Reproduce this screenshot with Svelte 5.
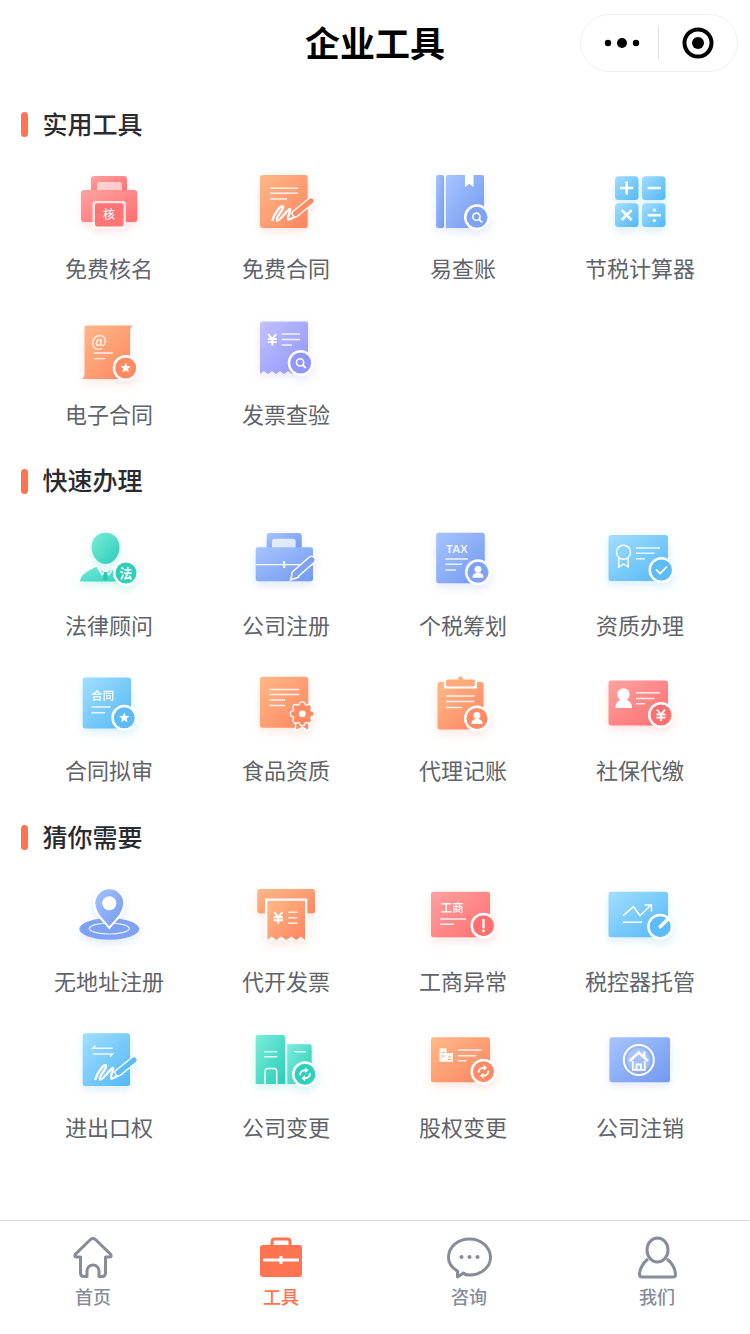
<script>
  const sections = [
    { title: '实用工具', items: [
      ['免费核名', 'printer', 'red'], ['免费合同', 'contract', 'orange'], ['易查账', 'book', 'blue'], ['节税计算器', 'calc', 'sky'],
      ['电子合同', 'econtract', 'orange'], ['发票查验', 'invoice', 'violet']
    ] },
    { title: '快速办理', items: [
      ['法律顾问', 'lawyer', 'teal'], ['公司注册', 'case', 'blue'], ['个税筹划', 'tax', 'blue'], ['资质办理', 'cert', 'sky'],
      ['合同拟审', 'review', 'sky'], ['食品资质', 'food', 'orange'], ['代理记账', 'clip', 'orange'], ['社保代缴', 'idcard', 'red']
    ] },
    { title: '猜你需要', items: [
      ['无地址注册', 'pin', 'blue'], ['代开发票', 'receipt', 'orange'], ['工商异常', 'abnormal', 'red'], ['税控器托管', 'chart', 'sky'],
      ['进出口权', 'trade', 'sky'], ['公司变更', 'company', 'teal'], ['股权变更', 'equity', 'orange'], ['公司注销', 'cancel', 'blue']
    ] }
  ];
  const tabs = [['首页', 'home'], ['工具', 'tools'], ['咨询', 'chat'], ['我们', 'user']];
  const tones = {
    red: ['#ffa2a2', '#ff6e6e'], orange: ['#ffb988', '#ff8460'], blue: ['#a6c4ff', '#7399f0'],
    sky: ['#a2deff', '#52b8f6'], violet: ['#c2c2ff', '#8f93f9'], teal: ['#7aeedb', '#2accb6']
  };
  const solid = {
    red: '#ff6f6f', orange: '#ff8a64', blue: '#7fa2f3', sky: '#5dbcf6', violet: '#9497fa', teal: '#2ed0ba'
  };
  const lobes = [0, 1, 2, 3, 4, 5, 6, 7].map((i) => [
    (56.3 + 9 * Math.cos((i * Math.PI) / 4)).toFixed(2),
    (46.8 + 9 * Math.sin((i * Math.PI) / 4)).toFixed(2)
  ]);
  function star(cx, cy, r) {
    const p = [];
    for (let i = 0; i < 10; i++) {
      const a = -Math.PI / 2 + (i * Math.PI) / 5, q = i % 2 ? r * 0.45 : r;
      p.push((cx + q * Math.cos(a)).toFixed(2) + ',' + (cy + q * Math.sin(a)).toFixed(2));
    }
    return p.join(' ');
  }
</script>

{#snippet badge(cx, cy, tone)}
  <circle {cx} {cy} r="13" fill="#fff" />
  <circle {cx} {cy} r="10.5" fill={solid[tone]} />
{/snippet}

{#snippet magnifier(cx, cy)}
  <circle cx={cx - 0.6} cy={cy - 0.6} r="3.6" fill="none" stroke="#fff" stroke-width="1.6" />
  <path d="M{cx + 2} {cy + 2}l2.6 2.6" stroke="#fff" stroke-width="1.8" stroke-linecap="round" />
{/snippet}

{#snippet personGlyph(cx, cy)}
  <circle {cx} cy={cy - 3} r="3.4" fill="#fff" />
  <path d="M{cx - 5.5} {cy + 5.5}c0-3.6 2-5 5.5-5s5.5 1.4 5.5 5z" fill="#fff" />
{/snippet}

{#snippet refreshGlyph(cx, cy)}
  <path d="M{cx - 5} {cy + 1}a5 5 0 0 1 5-5M{cx + 5} {cy - 1}a5 5 0 0 1-5 5" fill="none" stroke="#fff" stroke-width="1.9" />
  <path d="M{cx} {cy - 7}l3.6 3-3.6 3zM{cx} {cy + 7}l-3.6-3 3.6-3z" fill="#fff" />
{/snippet}

{#snippet signature(tone)}
  <path class="sig" d="M26.5 55C29 47 35 40 37 41.5C39 43.5 28.5 53.5 31 55.5C33.5 57 42 43.5 44 44C46 45 40 53 42.5 54.5C44.5 55 49 51 53 49.5" />
  <path d="M49.5 48.5L65 36" stroke="#fff" stroke-width="8" stroke-linecap="round" />
  <path d="M49.5 48.5L65 36" stroke={solid[tone]} stroke-width="5.2" stroke-linecap="round" />
{/snippet}

{#snippet yen(cx, cy)}
  <path d="M{cx - 4} {cy - 5.5}L{cx} {cy - 0.5}L{cx + 4} {cy - 5.5}M{cx} {cy - 0.5}V{cy + 6}M{cx - 4.5} {cy - 0.5}H{cx + 4.5}M{cx - 4.5} {cy + 2.6}H{cx + 4.5}" fill="none" stroke="#fff" stroke-width="1.9" />
{/snippet}

{#snippet glyph(name, tone)}
  {@const g = `url(#grad-${tone})`}
  {#if name === 'printer'}
    <path d="M22 25V14a3 3 0 0 1 3-3h30a3 3 0 0 1 3 3v11z" fill={g} />
    <path d="M28 25v-5a3 3 0 0 1 3-3h19a3 3 0 0 1 3 3v5z" fill="#fff" opacity=".6" />
    <rect x="12" y="25" width="56.3" height="32" rx="3" fill={g} />
    <rect x="23.5" y="36" width="33.5" height="27.5" rx="3" fill="#fff" opacity=".75" />
    <rect x="26" y="38.2" width="28.5" height="23.4" rx="2" fill="#ff7474" />
    <text class="t" x="40" y="54.4" font-size="12">核</text>
  {:else if name === 'contract'}
    <rect x="14" y="10" width="47.7" height="53" rx="2.5" fill={g} />
    <path class="ln" d="M24 23.3H52M24 28.3H52M24 34H41" />
    {@render signature(tone)}
  {:else if name === 'book'}
    <rect x="13" y="10" width="8" height="53" rx="2" fill={g} />
    <path d="M25 10H59a2 2 0 0 1 2 2V61a2 2 0 0 1-2 2H23V12a2 2 0 0 1 2-2z" fill={g} />
    <path d="M42 10h8.5v12l-4.2-3.2L42 22z" fill="#fff" />
    {@render badge(54, 52.3, 'blue')}
    {@render magnifier(54, 52.3)}
  {:else if name === 'calc'}
    <rect x="15" y="11.3" width="23.5" height="23.7" rx="3.5" fill="url(#grad-sky)" />
    <rect x="42" y="11.3" width="23.5" height="23.7" rx="3.5" fill="url(#grad-sky)" />
    <rect x="15" y="38.3" width="23.5" height="23.7" rx="3.5" fill="url(#grad-sky)" />
    <rect x="42" y="38.3" width="23.5" height="23.7" rx="3.5" fill="url(#grad-sky)" />
    <path d="M26.7 16.5V29.5M20.2 23H33.2M47.7 23H61M21.8 45.2L31.6 55M31.6 45.2L21.8 55M47.7 50.2H61" stroke="#fff" stroke-width="2.6" fill="none" />
    <circle cx="54.4" cy="45" r="1.6" fill="#fff" /><circle cx="54.4" cy="55.5" r="1.6" fill="#fff" />
  {:else if name === 'econtract'}
    <path d="M17.5 14.5H64Q61 16 61 20V65a3 3 0 0 1-2 3H13Q15.5 66.5 15.5 63V16.5a2 2 0 0 1 2-2z" fill={g} />
    <text class="t soft" x="30" y="35.5" font-size="16">@</text>
    <path class="ln" d="M25 42H43.7M25 47.6H36" />
    {@render badge(56.7, 57, 'orange')}
    <polygon points={star(56.7, 57, 5.4)} fill="#fff" />
  {:else if name === 'invoice'}
    <path d="M16 10.5H60a2 2 0 0 1 2 2V63l-4-3-4 3-4-3-4 3-4-3-4 3-4-3-4 3-4-3-4 3-4-3-4 3V12.5a2 2 0 0 1 2-2z" fill={g} />
    {@render yen(26.3, 28.5)}
    <path class="ln" d="M35.7 23H54M35.7 28.5H54M35.7 34H46" />
    {@render badge(54.7, 52, 'violet')}
    {@render magnifier(54.7, 52)}
  {:else if name === 'lawyer'}
    <path d="M36.5 10.7C45 10.7 50.5 17 50.5 25C50.5 33 45 42 36.5 42C28 42 22.5 33 22.5 25C22.5 17 28 10.7 36.5 10.7z" fill={g} />
    <path d="M11 59.5C12 53 16 50 28 44.5L36.5 52L45 44.5C52 48 60 50 64 56V59.5Z" fill={g} />
    <path d="M28 44L33 52.5L36.5 49L40 52.5L45 44" fill="none" stroke="#fff" stroke-width="1.5" />
    <path d="M34.8 50h3.4l-.6 2.2 1.4 5-2.5 2.3-2.5-2.3 1.4-5z" fill="#26c8b1" />
    {@render badge(57, 51, 'teal')}
    <text class="t strong" x="57" y="55.6" font-size="13">法</text>
  {:else if name === 'case'}
    <path d="M20.7 26V14a3 3 0 0 1 3-3H52.7a3 3 0 0 1 3 3V26z" fill={g} />
    <path d="M26 26v-6.7a2.6 2.6 0 0 1 2.6-2.6H47.1A2.6 2.6 0 0 1 49.7 19.3V26z" fill="#fff" opacity=".75" />
    <rect x="9.7" y="25.3" width="57.3" height="34" rx="2.3" fill={g} />
    <path d="M9.7 42.7H67" stroke="#fff" stroke-width="1.3" />
    <rect x="37" y="39.3" width="2.2" height="6.7" fill="#fff" />
    <path d="M49.5 52L65.5 38" stroke="#fff" stroke-width="8.6" stroke-linecap="round" />
    <path d="M43.5 59L46 49.5L54 55.5Z" fill="#fff" />
    <path d="M49.5 52L65.5 38" stroke={solid.blue} stroke-width="5.8" stroke-linecap="round" />
    <path d="M45.7 56.7L47.3 50.3L52 54.5Z" fill={solid.blue} />
  {:else if name === 'tax'}
    <rect x="13.2" y="10.7" width="48.6" height="50.6" rx="2.5" fill={g} />
    <text class="t soft lat" x="34" y="31" font-size="11.4">TAX</text>
    <path class="ln" d="M22.5 37H45M22.5 42.3H39M22.5 48H33" />
    {@render badge(55, 50.3, 'blue')}
    {@render personGlyph(55, 50.3)}
  {:else if name === 'cert'}
    <rect x="8.5" y="13" width="59.5" height="46" rx="2.5" fill={g} />
    <circle cx="23.5" cy="30.3" r="7" fill="none" stroke="#fff" stroke-width="1.4" />
    <path d="M18.8 36V45L23.5 42L28.2 45V36" fill="none" stroke="#fff" stroke-width="1.4" />
    <path class="ln" d="M36 26H60M36 31.3H54.5M36 36.7H45" />
    {@render badge(61.5, 48, 'sky')}
    <path d="M56.5 48l3.6 3.6 6.4-6.4" fill="none" stroke="#fff" stroke-width="1.8" stroke-linecap="round" />
  {:else if name === 'review'}
    <rect x="13.7" y="10.5" width="48.3" height="51" rx="2.5" fill={g} />
    <text class="t soft strong" x="33.7" y="33.3" font-size="11.5">合同</text>
    <path class="ln" d="M22.7 40H41.7M22.7 45.8H36" />
    {@render badge(55.3, 50.8, 'sky')}
    <polygon points={star(55.3, 50.8, 5.4)} fill="#fff" />
  {:else if name === 'food'}
    <rect x="14" y="9.8" width="48.3" height="51" rx="2.5" fill={g} />
    <path class="ln" d="M23.3 22.5H53.3M23.3 27.5H53.3M23.3 33H39M23.3 38.5H39" />
    <path d="M49.5 54V64L56.3 60.5L63 64V54Z" fill="#ff8a64" stroke="#fff" stroke-width="1.6" />
    {#each lobes as [x, y]}
      <circle cx={x} cy={y} r="3.6" fill="#fff" />
    {/each}
    {#each lobes as [x, y]}
      <circle cx={x} cy={y} r="2.3" fill="#ff8a64" />
    {/each}
    <circle cx="56.3" cy="46.8" r="9" fill="#ff8a64" />
    <circle cx="56.3" cy="46.8" r="3.4" fill="#fff" />
  {:else if name === 'clip'}
    <rect x="14.5" y="15" width="46" height="47.5" rx="2.5" fill={g} />
    <path d="M21 21.6V15a3 3 0 0 1 3-3H51a3 3 0 0 1 3 3v6.6z" fill="#fff" />
    <rect x="23" y="12.5" width="29" height="7" rx="2" fill="#ffab7a" />
    <circle cx="37.5" cy="12" r="2.4" fill="#ffab7a" />
    <path class="ln" d="M23 29H51.5M23 34.5H51.5M23 40.5H39" />
    {@render badge(54, 51.5, 'orange')}
    {@render personGlyph(54, 51.5)}
  {:else if name === 'idcard'}
    <rect x="8.5" y="13.5" width="59.5" height="45" rx="2.5" fill={g} />
    <circle cx="23.5" cy="27.5" r="6.2" fill="#fff" />
    <path d="M15.5 41c0-5.5 3-8.5 8-8.5s8.5 3 8.5 8.5z" fill="#fff" />
    <path class="ln" d="M36 25.8H60M36 31.5H54.5M36 36.8H45" />
    {@render badge(61, 48, 'red')}
    {@render yen(61, 48)}
  {:else if name === 'pin'}
    <ellipse cx="40.3" cy="51" rx="30" ry="10.7" fill={solid.blue} />
    <ellipse cx="40.3" cy="50.5" rx="20" ry="5.5" fill="none" stroke="#fff" stroke-width="1.2" opacity=".85" />
    <path d="M40.3 50C36 44 25.3 36 25.3 25.3a15 15 0 0 1 30 0C55.3 36 44.6 44 40.3 50z" fill={g} stroke="#fff" stroke-width="2" />
    <circle cx="40.3" cy="25.3" r="7" fill="#fff" />
  {:else if name === 'receipt'}
    <rect x="11.3" y="11" width="57.7" height="24.3" rx="2.5" fill={g} />
    <path d="M19 20.5H61.3V62H19z" fill="#fff" />
    <path d="M21.3 22.7H59V62l-4-3.6-4.8 3.6-4.8-3.6-5.2 3.6-5.2-3.6-4.8 3.6-4.8-3.6-4 3.6z" fill={g} />
    {@render yen(32.3, 39.7)}
    <path class="ln" d="M42.3 34.3H51.3M42.3 39.7H51.3M42.3 45.3H51.3" />
  {:else if name === 'abnormal'}
    <rect x="8" y="13.7" width="59" height="45.6" rx="2.5" fill={g} />
    <text class="t soft strong" x="29" y="33.6" font-size="11.5">工商</text>
    <path class="ln" d="M17 41H43M17 46.3H31" />
    {@render badge(60.5, 47.7, 'red')}
    <path d="M60.5 41.8V49.5" stroke="#fff" stroke-width="2.3" stroke-linecap="round" />
    <circle cx="60.5" cy="53" r="1.4" fill="#fff" />
  {:else if name === 'chart'}
    <rect x="8.5" y="13.7" width="59.5" height="45.6" rx="2.5" fill={g} />
    <path d="M23 37.7L33.5 28.7L40 37.7L51 27M44.5 27H51.5V33.5M23 44.3H42" fill="none" stroke="#fff" stroke-width="1.5" />
    {@render badge(60.2, 48.7, 'sky')}
    <path d="M60.2 48.7L70 39" stroke="#fff" stroke-width="3.4" stroke-linecap="round" />
  {:else if name === 'trade'}
    <rect x="13.7" y="9.3" width="47.3" height="52.7" rx="2.5" fill={g} />
    <path class="ln" d="M26.5 21.5L23.7 24.3H43.7M23.7 30H43.7L41 32.7" fill="none" />
    {@render signature(tone)}
  {:else if name === 'company'}
    <path d="M12 11H36.7A2.3 2.3 0 0 1 39 13.3V60H9.7V13.3A2.3 2.3 0 0 1 12 11z" fill={g} />
    <path d="M41.3 20.3H63.5a2.2 2.2 0 0 1 2.2 2.2V60H41.3z" fill={g} />
    <path class="ln" d="M18 27.7H31.3M18 32.7H31.3M48.3 27.7H59.7" />
    <path d="M19 60V48a3 3 0 0 1 3-3.5H27.7a3 3 0 0 1 3 3.5V60" fill="none" stroke="#fff" stroke-width="1.5" />
    {@render badge(59, 50.3, 'teal')}
    {@render refreshGlyph(59, 50.3)}
  {:else if name === 'equity'}
    <rect x="8" y="13.3" width="59" height="45" rx="2.5" fill={g} />
    <path d="M16.5 24.3H23.5V29H30V37.7H16.5z" fill="#fff" opacity=".92" />
    <path d="M19 28.5H21.5M19 32H21.5M25 33H28M25 35.5H28" stroke="#ffa57c" stroke-width="1" />
    <path class="ln" d="M35 26H59M35 31.7H53.5M35 36.7H43.5" />
    {@render badge(60.5, 47.7, 'orange')}
    {@render refreshGlyph(60.5, 47.7)}
  {:else if name === 'cancel'}
    <rect x="9.5" y="13.3" width="60.5" height="45" rx="2.5" fill={g} />
    <circle cx="38.8" cy="36" r="15" fill="none" stroke="#fff" stroke-width="2" />
    <circle cx="38.8" cy="36" r="11.8" fill="#fff" opacity=".22" />
    <path d="M29.5 37L38.8 28.5L48 37" fill="none" stroke="#fff" stroke-width="2.6" />
    <path d="M43 31V27.5H45.5V33.5" fill="#fff" />
    <path d="M32.8 37V45.8H44.8V37M36.5 45.8V40.5H41V45.8" fill="none" stroke="#fff" stroke-width="1.8" />
  {/if}
{/snippet}

<svg class="defs" aria-hidden="true">
  <defs>
    {#each Object.entries(tones) as [name, stops]}
      <linearGradient id="grad-{name}" x1="0" y1="0" x2="1" y2="1">
        <stop offset="0" stop-color={stops[0]} />
        <stop offset="1" stop-color={stops[1]} />
      </linearGradient>
    {/each}
  </defs>
</svg>

<div class="page">
  <header class="nav">
    <span></span>
    <h1>企业工具</h1>
    <div class="capsule">
      <svg class="more" viewBox="0 0 36 12" aria-hidden="true">
        <circle cx="4" cy="6" r="3.2" /><circle cx="18" cy="6" r="5" /><circle cx="32" cy="6" r="3.2" />
      </svg>
      <i class="rule"></i>
      <svg class="rec" viewBox="0 0 32 32" aria-hidden="true">
        <circle cx="16" cy="16" r="13.5" fill="none" stroke="#000" stroke-width="4" />
        <circle cx="16" cy="16" r="6" />
      </svg>
    </div>
  </header>

  <main class="content">
    {#each sections as section}
      <section>
        <h2><span>{section.title}</span></h2>
        <div class="grid">
          {#each section.items as [label, icon, tone]}
            <div class="item">
              <svg class="icon {tone}" viewBox="0 0 80 80" aria-hidden="true">
                {@render glyph(icon, tone)}
              </svg>
              <span>{label}</span>
            </div>
          {/each}
        </div>
      </section>
    {/each}
  </main>

  <nav class="tabs">
    {#each tabs as [label, icon]}
      <div class="tab" class:on={icon === 'tools'}>
        <svg viewBox="0 0 48 44" aria-hidden="true">
          {#if icon === 'home'}
            <path class="tl" d="M11.5 21H7.500Q5 21 6.300 18.400L21.500 3.500Q24 1.500 26.500 3.500L41.700 18.400Q43 21 40.500 21H36.500V37Q36.500 40.500 33 40.500H30V35A6 6 0 0 0 18 35V40.500H15Q11.500 40.500 11.500 37Z" />
          {:else if icon === 'tools'}
            <path d="M15 10V5.500A2.500 2.500 0 0 1 17.500 3H30.500A2.500 2.500 0 0 1 33 5.500V10" fill="none" stroke="#ff7350" stroke-width="3" />
            <rect x="3" y="9" width="42" height="32" rx="3" fill="#ff7350" />
            <path d="M6 24H42M24 20V28" stroke="#fff" stroke-width="3" />
          {:else if icon === 'chat'}
            <path class="tl" d="M12.500 41V35C6.500 31.500 3.500 27 3.500 21.500C3.500 11 12.500 3 24.500 3C36 3 45.500 11 45.500 21.500C45.500 31 36 39 24.500 39C22.500 39 20 39 18.500 37Z" />
            <circle cx="16.5" cy="21" r="2" fill="#868c99" /><circle cx="24.5" cy="21" r="2" fill="#868c99" /><circle cx="32.5" cy="21" r="2" fill="#868c99" />
          {:else}
            <ellipse class="tl" cx="24.5" cy="14" rx="10.5" ry="12" />
            <path class="tl" d="M15 23C10 27 7 33 6.500 38Q6.500 41 9 41H40Q43 41 42.500 38C42 33 39 27 34 23" />
          {/if}
        </svg>
        <span>{label}</span>
      </div>
    {/each}
  </nav>
</div>

<style>
  :global(body) { background: #fff; }
  .defs { position: absolute; width: 0; height: 0; }
  .page {
    display: flex; flex-direction: column; height: 1334px; overflow: hidden;
    font-family: "Noto Sans CJK SC", "Noto Sans", sans-serif;
  }
  .nav {
    height: 88px; display: grid; grid-template-columns: 1fr auto 1fr; align-items: center;
  }
  h1 { margin: -6px 0 0; font-size: 35px; font-weight: 700; color: #000; }
  .capsule {
    justify-self: end; margin-right: 12px; margin-top: -2px;
    width: 158px; height: 58px; box-sizing: border-box; border: 1px solid #efefef; border-radius: 29px;
    display: flex; align-items: center; padding-left: 23px;
  }
  .more { width: 36px; height: 12px; fill: #000; }
  .rule { width: 1px; height: 34px; background: #e3e3e3; margin-left: 18px; }
  .rec { width: 32px; height: 32px; margin-left: 23px; fill: #000; }
  .content {
    flex: 1; display: flex; flex-direction: column; gap: 38px; padding: 24px 20px 0 20.5px;
  }
  h2 {
    margin: 0 0 28px; height: 25px; display: flex; align-items: center; gap: 15px;
    font-size: 25px; font-weight: 500; color: #2a2b30;
  }
  h2 span { margin-bottom: 4px; }
  h2::before {
    content: ''; width: 7px; height: 25px; border-radius: 4px; background: #ff7350;
  }
  .grid {
    display: grid; grid-template-columns: repeat(4, 177px); row-gap: 25.5px;
  }
  .item { display: flex; flex-direction: column; align-items: center; }
  .icon { width: 80px; height: 80px; overflow: visible; }
  .item span {
    margin-top: 6px; padding-bottom: 2px; line-height: 32px; font-size: 22px; color: #606369; white-space: nowrap;
  }
  .red { filter: drop-shadow(0 4px 4px rgba(255, 104, 104, .18)); }
  .orange { filter: drop-shadow(0 4px 4px rgba(255, 127, 92, .18)); }
  .blue { filter: drop-shadow(0 4px 4px rgba(110, 149, 238, .2)); }
  .sky { filter: drop-shadow(0 4px 4px rgba(76, 180, 246, .2)); }
  .violet { filter: drop-shadow(0 4px 4px rgba(139, 143, 249, .2)); }
  .teal { filter: drop-shadow(0 4px 4px rgba(32, 203, 179, .2)); }
  .ln { stroke: #fff; stroke-width: 1.4; opacity: .85; fill: none; }
  .sig { stroke: #fff; stroke-width: 2.4; fill: none; stroke-linecap: round; stroke-linejoin: round; }
  .t { fill: #fff; text-anchor: middle; font-weight: 500; }
  .strong { font-weight: 700; }
  .soft { opacity: .85; }
  .lat { font-family: "Liberation Sans", sans-serif; font-weight: 700; }
  .tabs {
    height: 114px; box-sizing: border-box; border-top: 1px solid #d6d6d6; padding-top: 15px;
    display: grid; grid-template-columns: repeat(4, 188px); justify-content: center;
  }
  .tab { display: flex; flex-direction: column; align-items: center; color: #868c99; }
  .tab svg { width: 48px; height: 44px; }
  .tab span { margin-top: 3px; font-size: 18px; line-height: 26px; font-weight: 500; }
  .tab.on { color: #ff7350; }
  .tl { fill: none; stroke: #868c99; stroke-width: 3; stroke-linejoin: round; }
</style>
